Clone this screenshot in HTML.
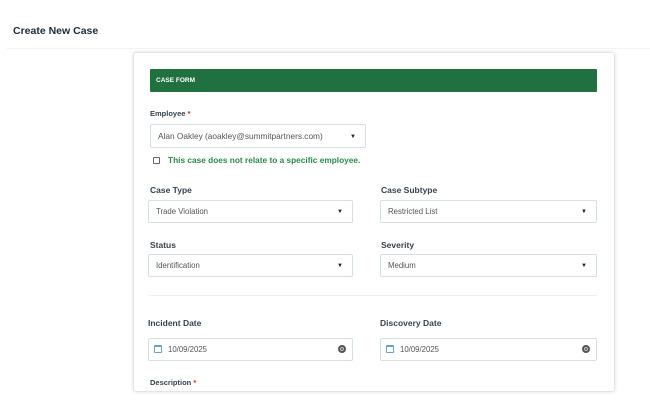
<!DOCTYPE html>
<html><head><style>
*{box-sizing:border-box;margin:0;padding:0}
body{width:650px;height:414px;background:#fff;font-family:"Liberation Sans",sans-serif;position:relative;overflow:hidden;color:#1f2d3d}
.abs{position:absolute}
.lbl{position:absolute;font-size:8.5px;font-weight:bold;color:#36424e}
.sel{position:absolute;border:1px solid #d6dee6;border-radius:2px;height:23px;font-size:7.8px;color:#555;line-height:21px;padding-left:7px;background:#fff}
.sel .ar{position:absolute;right:9px;top:1px;font-size:6px;color:#222}
.star{color:#d22}
.cal{position:absolute;left:5px;top:6px;width:8px;height:8px;border:1px solid #6aa0c8;border-top-width:2px;border-radius:1px}
.clr{position:absolute;right:6px;top:6px;width:8px;height:8px;border-radius:50%;background:#555;border:2px solid #555;box-shadow:inset 0 0 0 1px #ccc}
</style></head><body>
<div class="abs" style="left:13px;top:25px;font-size:10.5px;font-weight:bold;color:#1e2b3a">Create New Case</div>
<div class="abs" style="left:7px;top:48px;width:643px;height:1px;background:#f0f2f4"></div>
<div class="abs" style="left:133px;top:52px;width:482px;height:340px;border:1px solid #e2e4e6;border-radius:3px;box-shadow:0 0 4px rgba(0,0,0,.12)"></div>
<div class="abs" style="left:150px;top:69px;width:447px;height:23px;background:#21703f;border-radius:1px;color:#fff;font-size:6.5px;font-weight:bold;line-height:23px;padding-left:6px">CASE FORM</div>
<div class="lbl" style="left:150px;top:109px;font-size:7.5px">Employee <span class="star">*</span></div>
<div class="sel" style="left:150px;top:124px;width:216px;font-size:8.3px;line-height:22px;height:24px">Alan Oakley (aoakley@summitpartners.com)<span class="ar" style="top:1px">▼</span></div>
<div class="abs" style="left:153px;top:157px;width:7px;height:7px;border:1px solid #666;border-radius:1px"></div>
<div class="abs" style="left:168px;top:155px;font-size:8.3px;color:#2a8a45;font-weight:bold">This case does not relate to a specific employee.</div>
<div class="lbl" style="left:150px;top:185px">Case Type</div>
<div class="lbl" style="left:381px;top:185px">Case Subtype</div>
<div class="sel" style="left:148px;top:200px;width:205px">Trade Violation<span class="ar">▼</span></div>
<div class="sel" style="left:380px;top:200px;width:217px">Restricted List<span class="ar">▼</span></div>
<div class="lbl" style="left:150px;top:240px">Status</div>
<div class="lbl" style="left:381px;top:240px">Severity</div>
<div class="sel" style="left:148px;top:254px;width:205px">Identification<span class="ar">▼</span></div>
<div class="sel" style="left:380px;top:254px;width:217px">Medium<span class="ar">▼</span></div>
<div class="abs" style="left:148px;top:295px;width:449px;height:1px;background:#eef1f3"></div>
<div class="lbl" style="left:148px;top:318px">Incident Date</div>
<div class="lbl" style="left:380px;top:318px">Discovery Date</div>
<div class="sel" style="left:148px;top:338px;width:205px;padding-left:19px"><span class="cal"></span>10/09/2025<span class="clr"></span></div>
<div class="sel" style="left:380px;top:338px;width:217px;padding-left:19px"><span class="cal"></span>10/09/2025<span class="clr"></span></div>
<div class="lbl" style="left:150px;top:378px;font-size:7.5px">Description <span class="star">*</span></div>
</body></html>
